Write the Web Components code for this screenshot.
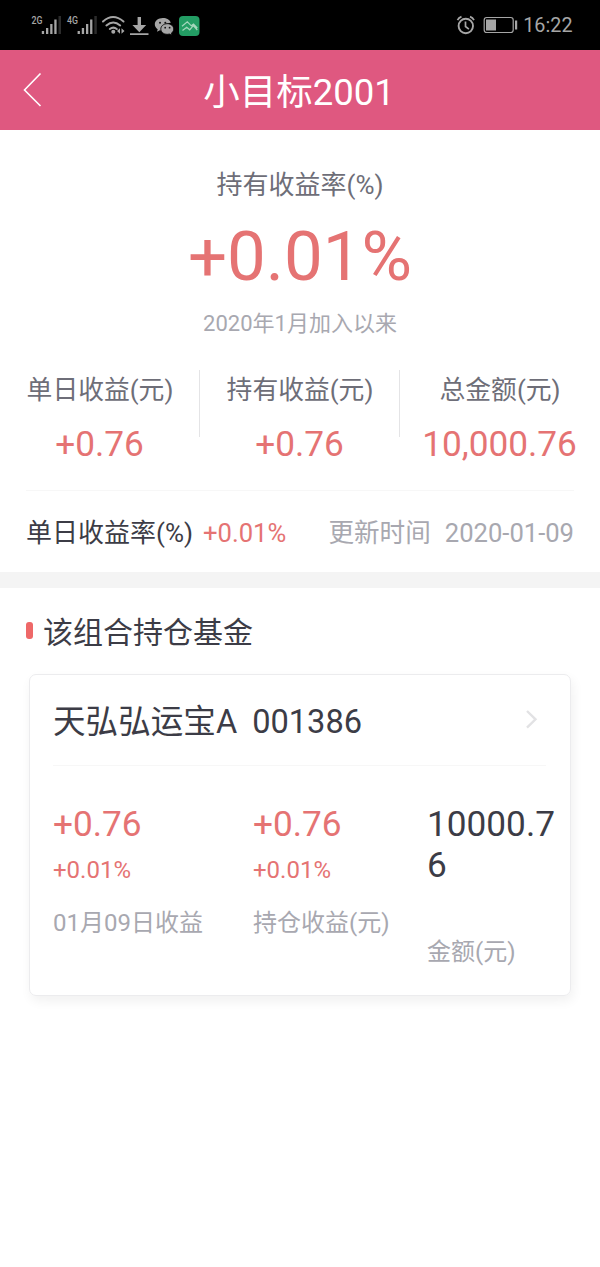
<!DOCTYPE html>
<html lang="zh-CN">
<head>
<meta charset="utf-8">
<meta name="viewport" content="width=device-width, initial-scale=1">
<title>小目标2001</title>
<style>
  :root {
    --color-brand: #df5880;
    --color-up: #e57373;
    --color-dark: #3c3c46;
    --color-mid: #6e6e78;
    --color-muted: #a8a8b0;
    --color-line: #f7f7f7;
  }
  body {
    margin: 0;
    min-height: 1267px;
    background: #fff;
    color: var(--color-dark);
    font-family: Roboto, "Noto Sans CJK SC", sans-serif;
  }
</style>
</head>
<body>
<status-bar>16:22</status-bar>
<nav-bar>小目标2001</nav-bar>

<rate-summary>
  <span slot="label">持有收益率(%)</span>
  <span slot="rate">+0.01%</span>
  <span slot="since">2020年1月加入以来</span>
</rate-summary>

<stat-row>
  <stat-item label="单日收益(元)">+0.76</stat-item>
  <stat-item label="持有收益(元)">+0.76</stat-item>
  <stat-item label="总金额(元)">10,000.76</stat-item>
</stat-row>

<daily-rate>
  <span slot="label">单日收益率(%)</span>
  <span slot="rate">+0.01%</span>
  <span slot="caption">更新时间</span>
  <span slot="date">2020-01-09</span>
</daily-rate>

<section-title>该组合持仓基金</section-title>

<fund-card name="天弘弘运宝A" code="001386">
  <fund-figure percent="+0.01%" label="01月09日收益">+0.76</fund-figure>
  <fund-figure percent="+0.01%" label="持仓收益(元)">+0.76</fund-figure>
  <fund-figure plain label="金额(元)">10000.76</fund-figure>
</fund-card>

<script>
class StatusBar extends HTMLElement {
    constructor() {
        super();
        this.attachShadow({ mode: 'open' });
        this.shadowRoot.innerHTML = `
            <style>
            :host {
                display: flex;
                justify-content: space-between;
                height: 50px;
                background: #000;
                color: #a6a6a6;
                font-size: 19.800px;
                line-height: 52px;
            }
            svg { display: block; }
            .right { display: flex; padding-right: 27.500px; }
            </style>
            <svg width="210" height="50" fill="#a6a6a6">
                <g font-family="Roboto, sans-serif" font-size="10.500" font-weight="500">
                    <text x="31.500" y="24" textLength="11" lengthAdjust="spacingAndGlyphs">2G</text>
                    <text x="67" y="24" textLength="11" lengthAdjust="spacingAndGlyphs">4G</text>
                </g>
                <path d="M41.800 31h2.300v3h-2.300zM46 28h2.300v6H46zM50.200 24h2.300v10h-2.300zM54.300 19.500h2.300v14.500h-2.300z"/>
                <path fill="#2c2c2c" d="M58.500 16h2.500v18h-2.500z"/>
                <path d="M77.600 31h2.300v3h-2.300zM81.800 28h2.300v6h-2.300zM86 24h2.300v10H86zM90.100 19.500h2.300v14.500h-2.300z"/>
                <path fill="#2c2c2c" d="M94.300 16h2.500v18h-2.500z"/>
                <g fill="none" stroke="#a6a6a6" stroke-width="2" stroke-linecap="round">
                    <path d="M103 21.500q10-9 20.500 0M106.400 25.400q6.800-5.800 13.800 0M109.800 29q3.600-2.800 7 0"/>
                </g>
                <circle cx="113.300" cy="31.800" r="2"/>
                <path d="M120 28.200v5.600l-3-2.800zM121.500 28.200v5.600l3-2.800z"/>
                <path d="M137.600 17h3.400v8h5.200l-6.900 7.200-6.900-7.200h5.200zM130 33.300h18.500v1.700H130z"/>
                <path d="M162.800 18c-4.500 0-8 2.800-8 6.300 0 2 1.100 3.700 2.900 4.900l-.7 2.500 2.900-1.500c.9.300 1.900.4 2.900.4-.7-4.700 3-7.900 8-7.900-.9-2.700-4-4.700-8-4.700z"/>
                <path d="M167.300 23.700c-3.700 0-6.500 2.400-6.500 5.300s2.800 5.300 6.500 5.300c.8 0 1.500-.1 2.200-.3l2.400 1.200-.6-2c1.500-1 2.400-2.500 2.400-4.200 0-2.900-2.800-5.300-6.400-5.300z" stroke="#000" stroke-width=".8"/>
                <g fill="#111">
                    <circle cx="160" cy="22.700" r="1"/><circle cx="165.300" cy="22.700" r="1"/>
                    <circle cx="165.200" cy="27.700" r=".9"/><circle cx="169.600" cy="27.700" r=".9"/>
                </g>
                <rect x="179" y="16" width="20.500" height="20" rx="4" fill="#239d64"/>
                <path d="M182 26.300l5.300-4.500 4 4 2.200-1.800 3.800 4M182.500 30.500l4.200-3.200 3 2.500 3.600-4.300 4 4.500" fill="none" stroke="#a5d7bd" stroke-width="1.200"/>
            </svg>
            <div class="right">
                <svg width="68" height="50" fill="none" stroke="#a6a6a6">
                    <circle cx="10.800" cy="26" r="7.200" stroke-width="1.900"/>
                    <path d="M10.500 21.500v5l3.400 2.700M2.500 20.200q1.200-2.500 4-3.600M15 16.600q2.800 1.100 4 3.600" stroke-width="1.700"/>
                    <rect x="29.200" y="17.500" width="29" height="15" rx="2.500" stroke-width="1.200"/>
                    <path d="M31 19.500h10v11H31zM60 20.500h2.200v9H60z" fill="#a6a6a6" stroke="none"/>
                </svg>
                <slot></slot>
            </div>
        `;
    }
}

class NavBar extends HTMLElement {
    constructor() {
        super();
        this.attachShadow({ mode: 'open' });
        this.shadowRoot.innerHTML = `
            <style>
            :host {
                display: grid;
                grid-template-columns: 59px 1fr 61px;
                height: 80px;
                background: var(--color-brand);
                color: #fff;
                font-size: 36.500px;
                line-height: 85px;
                text-align: center;
            }
            svg { display: block; }
            </style>
            <svg width="59" height="80" fill="none" stroke="#fff" stroke-width="1.6">
                <path d="M40.500 23.500L24.500 40l16 16"/>
            </svg>
            <slot></slot>
        `;
    }
}

class RateSummary extends HTMLElement {
    constructor() {
        super();
        this.attachShadow({ mode: 'open' });
        this.shadowRoot.innerHTML = `
            <style>
            :host {
                display: flex;
                flex-direction: column;
                align-items: center;
                padding-top: 35px;
            }
            .label {
                color: var(--color-mid);
                font-size: 26px;
                line-height: 40px;
            }
            .rate {
                color: var(--color-up);
                font-size: 69px;
                line-height: 104px;
            }
            .since {
                color: var(--color-muted);
                font-size: 22px;
                line-height: 30px;
            }
            </style>
            <div class="label"><slot name="label"></slot></div>
            <div class="rate"><slot name="rate"></slot></div>
            <div class="since"><slot name="since"></slot></div>
        `;
    }
}

class StatRow extends HTMLElement {
    constructor() {
        super();
        this.attachShadow({ mode: 'open' });
        this.shadowRoot.innerHTML = `
            <style>
            :host {
                display: grid;
                grid-template-columns: repeat(3, 1fr);
                height: 120px;
                margin-top: 31px;
            }
            ::slotted(:not(:last-child)) {
                background: linear-gradient(#e4e4e6, #e4e4e6) right top / 1px 67px no-repeat;
            }
            </style>
            <slot></slot>
        `;
    }
}

class StatItem extends HTMLElement {
    constructor() {
        super();
        this.attachShadow({ mode: 'open' });
        this.shadowRoot.innerHTML = `
            <style>
            :host {
                display: block;
                text-align: center;
                white-space: nowrap;
            }
            .label {
                color: var(--color-mid);
                font-size: 25.800px;
                line-height: 40px;
            }
            .value {
                margin-top: 10px;
                padding-right: 1px;
                color: var(--color-up);
                font-size: 35.200px;
                line-height: 49px;
            }
            </style>
            <div class="label"></div>
            <div class="value"><slot></slot></div>
        `;
    }

    static get observedAttributes() {
        return ['label'];
    }

    attributeChangedCallback(name, oldValue, newValue) {
        this.shadowRoot.querySelector('.label').textContent = newValue;
    }
}

class DailyRate extends HTMLElement {
    constructor() {
        super();
        this.attachShadow({ mode: 'open' });
        this.shadowRoot.innerHTML = `
            <style>
            :host {
                display: block;
                padding: 0 26px;
                border-bottom: 16px solid #f4f4f4;
                font-size: 25.600px;
                white-space: nowrap;
            }
            .row {
                display: flex;
                height: 81px;
                border-top: 1px solid var(--color-line);
                line-height: 84px;
            }
            .label { font-size: 26px; }
            .rate {
                margin-left: 10px;
                color: var(--color-up);
            }
            .update {
                display: flex;
                gap: 14px;
                margin-left: auto;
                color: var(--color-muted);
            }
            </style>
            <div class="row">
                <div class="label"><slot name="label"></slot></div>
                <div class="rate"><slot name="rate"></slot></div>
                <div class="update">
                    <slot name="caption"></slot>
                    <slot name="date"></slot>
                </div>
            </div>
        `;
    }
}

class SectionTitle extends HTMLElement {
    constructor() {
        super();
        this.attachShadow({ mode: 'open' });
        this.shadowRoot.innerHTML = `
            <style>
            :host {
                display: flex;
                gap: 10px;
                height: 86px;
                padding-left: 26px;
                font-size: 30px;
                line-height: 90px;
            }
            :host::before {
                content: "";
                width: 7px;
                height: 17px;
                margin-top: 34px;
                border-radius: 3px;
                background: #ee6868;
            }
            </style>
            <slot></slot>
        `;
    }
}

class FundCard extends HTMLElement {
    constructor() {
        super();
        this.attachShadow({ mode: 'open' });
        this.shadowRoot.innerHTML = `
            <style>
            :host {
                display: block;
                box-sizing: border-box;
                height: 322px;
                margin: 0 29px;
                padding: 0 14px 0 23px;
                border: 1px solid #ececee;
                border-radius: 7px;
                box-shadow: 2px 5px 12px rgba(0, 0, 0, 0.06);
            }
            .head {
                display: flex;
                height: 90px;
                margin-right: 10px;
                border-bottom: 1px solid var(--color-line);
                font-size: 32.600px;
                line-height: 94px;
                white-space: nowrap;
            }
            .code { margin-left: 15px; }
            .arrow {
                display: block;
                margin-left: auto;
            }
            .figures {
                display: grid;
                grid-template-columns: 200px 174px 1fr;
                padding-top: 38px;
            }
            </style>
            <div class="head">
                <span class="name"></span>
                <span class="code"></span>
                <svg class="arrow" width="22" height="90" fill="none" stroke="#e2e2e4" stroke-width="2.400">
                    <path d="M3 36l8.500 8.300-8.500 8.300"/>
                </svg>
            </div>
            <div class="figures"><slot></slot></div>
        `;
    }

    static get observedAttributes() {
        return ['name', 'code'];
    }

    attributeChangedCallback(name, oldValue, newValue) {
        this.shadowRoot.querySelector('.' + name).textContent = newValue;
    }
}

class FundFigure extends HTMLElement {
    constructor() {
        super();
        this.attachShadow({ mode: 'open' });
        this.shadowRoot.innerHTML = `
            <style>
            :host {
                display: block;
                color: var(--color-up);
            }
            :host([plain]) { color: var(--color-dark); }
            .value {
                font-size: 35.200px;
                line-height: 41px;
                word-break: break-all;
            }
            .percent {
                height: 32px;
                margin-top: 9px;
                font-size: 24px;
                line-height: 32px;
            }
            .label {
                margin-top: 21px;
                color: var(--color-muted);
                font-size: 24px;
                line-height: 32px;
            }
            /* the plain figure keeps a shorter blank line before its label */
            :host([plain]) .percent { height: 20px; }
            </style>
            <div class="value"><slot></slot></div>
            <div class="percent"></div>
            <div class="label"></div>
        `;
    }

    static get observedAttributes() {
        return ['percent', 'label'];
    }

    attributeChangedCallback(name, oldValue, newValue) {
        this.shadowRoot.querySelector('.' + name).textContent = newValue;
    }
}

customElements.define('status-bar', StatusBar);
customElements.define('nav-bar', NavBar);
customElements.define('rate-summary', RateSummary);
customElements.define('stat-row', StatRow);
customElements.define('stat-item', StatItem);
customElements.define('daily-rate', DailyRate);
customElements.define('section-title', SectionTitle);
customElements.define('fund-card', FundCard);
customElements.define('fund-figure', FundFigure);
</script>
</body>
</html>
